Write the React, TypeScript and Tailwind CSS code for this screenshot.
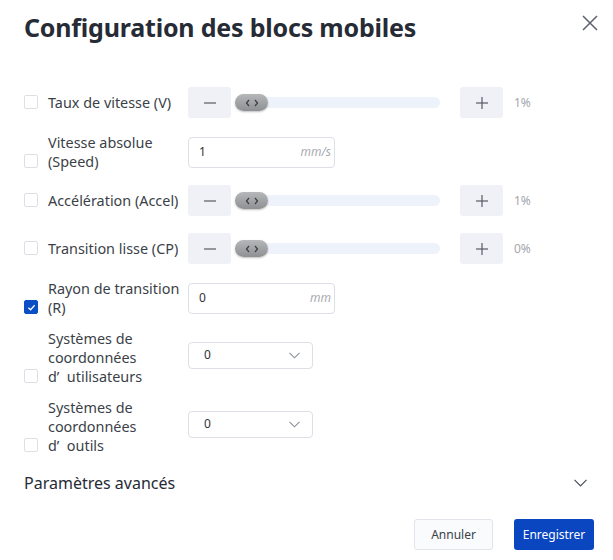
import React from "react";

const font = { fontFamily: "'Noto Sans', 'Liberation Sans', Arial, sans-serif" };

function Checkbox({ checked = false }: { checked?: boolean }) {
  return (
    <span
      className={`flex h-[14px] w-[14px] shrink-0 items-center justify-center rounded-[2px] border ${
        checked ? "border-[#0a4fc4] bg-[#0a4fc4]" : "border-[#dcdfe6] bg-white"
      }`}
    >
      {checked && (
        <svg width="9" height="9" viewBox="0 0 10 10" fill="none">
          <path d="M1.5 5.2 L4 7.5 L8.5 2.5" stroke="white" strokeWidth="1.4" />
        </svg>
      )}
    </span>
  );
}

function Label({ lines, checked }: { lines: string[]; checked?: boolean }) {
  return (
    <div className="flex w-[164px] shrink-0 items-end gap-[10px]">
      <span className="mb-[3px]">
        <Checkbox checked={checked} />
      </span>
      <div className="whitespace-pre text-[14.4px] leading-[19px] text-[#3b3f48]">
        {lines.map((l) => (
          <div key={l}>{l}</div>
        ))}
      </div>
    </div>
  );
}

function StepButton({ plus }: { plus?: boolean }) {
  return (
    <button className="flex h-[31px] w-[43px] shrink-0 items-center justify-center rounded-[3px] bg-[#eff1f6]">
      <svg width="14" height="14" viewBox="0 0 14 14" stroke="#555a64" strokeWidth="1.2">
        <path d="M1 7 H13" />
        {plus && <path d="M7 1 V13" />}
      </svg>
    </button>
  );
}

function SliderRow({ label, pct }: { label: string; pct: string }) {
  return (
    <div className="flex h-[31px] items-center">
      <Label lines={[label]} />
      <StepButton />
      <div className="relative ml-[4px] h-[11px] w-[205px] rounded-full bg-[#edf2fb]">
        <div className="absolute left-0 top-[-3px] flex h-[17px] w-[33px] items-center justify-center gap-[3px] rounded-full bg-gradient-to-b from-[#b5b7b9] to-[#8e9193] shadow-[0_1px_2px_rgba(0,0,0,0.25)]">
          <svg width="14" height="8" viewBox="0 0 14 8" fill="none" stroke="#3f4245" strokeWidth="1.3">
            <path d="M4 1 L1.5 4 L4 7" />
            <path d="M10 1 L12.5 4 L10 7" />
          </svg>
        </div>
      </div>
      <div className="ml-[20px]">
        <StepButton plus />
      </div>
      <span className="ml-[11px] text-[12px] text-[#a3a6ad]">{pct}</span>
    </div>
  );
}

function UnitInput({ value, unit }: { value: string; unit: string }) {
  return (
    <div className="flex h-[31px] w-[147px] items-center justify-between rounded-[4px] border border-[#dcdfe6] bg-white pl-[10px] pr-[3px]">
      <span className="text-[12px] text-[#333]">{value}</span>
      <span className="text-[12px] italic text-[#a8abb2]">{unit}</span>
    </div>
  );
}

function Select({ value }: { value: string }) {
  return (
    <div className="flex h-[27px] w-[125px] items-center justify-between rounded-[4px] border border-[#dcdfe6] bg-white pl-[15px] pr-[12px]">
      <span className="text-[12px] text-[#333]">{value}</span>
      <svg width="11" height="7" viewBox="0 0 11 7" fill="none" stroke="#8a8f98" strokeWidth="1.1">
        <path d="M0.5 0.8 L5.5 5.8 L10.5 0.8" />
      </svg>
    </div>
  );
}

export default function App() {
  return (
    <div className="relative h-[560px] w-[613px] bg-white" style={font}>
      <div className="flex items-start justify-between pl-[24px] pr-[15px] pt-[11px]">
        <h1 className="text-[25px] font-bold leading-[32px] tracking-[-0.2px] text-[#262b36]">
          Configuration des blocs mobiles
        </h1>
        <svg className="mt-[4px]" width="16" height="16" viewBox="0 0 16 16" stroke="#5c616b" strokeWidth="1.5">
          <path d="M1 1 L15 15 M15 1 L1 15" />
        </svg>
      </div>

      <div className="mt-[44px] flex flex-col pl-[24px]">
        <SliderRow label="Taux de vitesse (V)" pct="1%" />

        <div className="mt-[15px] flex h-[38px] items-center">
          <Label lines={["Vitesse absolue", "(Speed)"]} />
          <UnitInput value="1" unit="mm/s" />
        </div>

        <div className="mt-[14px]">
          <SliderRow label="Accélération (Accel)" pct="1%" />
        </div>

        <div className="mt-[17px]">
          <SliderRow label="Transition lisse (CP)" pct="0%" />
        </div>

        <div className="mt-[15px] flex h-[38px] items-center">
          <Label lines={["Rayon de transition", "(R)"]} checked />
          <UnitInput value="0" unit="mm" />
        </div>

        <div className="mt-[12px] flex h-[57px] items-center">
          <Label lines={["Systèmes de", "coordonnées", "d’  utilisateurs"]} />
          <div className="mb-[5px]">
            <Select value="0" />
          </div>
        </div>

        <div className="mt-[12px] flex h-[57px] items-center">
          <Label lines={["Systèmes de", "coordonnées", "d’  outils"]} />
          <div className="mb-[5px]">
            <Select value="0" />
          </div>
        </div>
      </div>

      <div className="mt-[17px] flex items-center justify-between pl-[24px] pr-[26px]">
        <span className="text-[16px] leading-[22px] text-[#262b36]">Paramètres avancés</span>
        <svg width="13" height="8" viewBox="0 0 13 8" fill="none" stroke="#4a4f58" strokeWidth="1.2">
          <path d="M0.5 0.8 L6.5 6.8 L12.5 0.8" />
        </svg>
      </div>

      <div className="mt-[25px] flex justify-end gap-[21px] pr-[19px]">
        <button className="h-[31px] w-[79px] rounded-[3px] border border-[#e1e4ea] bg-[#f9fbfd] text-[12px] text-[#3b3f48]">
          Annuler
        </button>
        <button className="h-[31px] w-[80px] rounded-[3px] bg-[#0a46bf] text-[12px] text-white">
          Enregistrer
        </button>
      </div>
    </div>
  );
}
